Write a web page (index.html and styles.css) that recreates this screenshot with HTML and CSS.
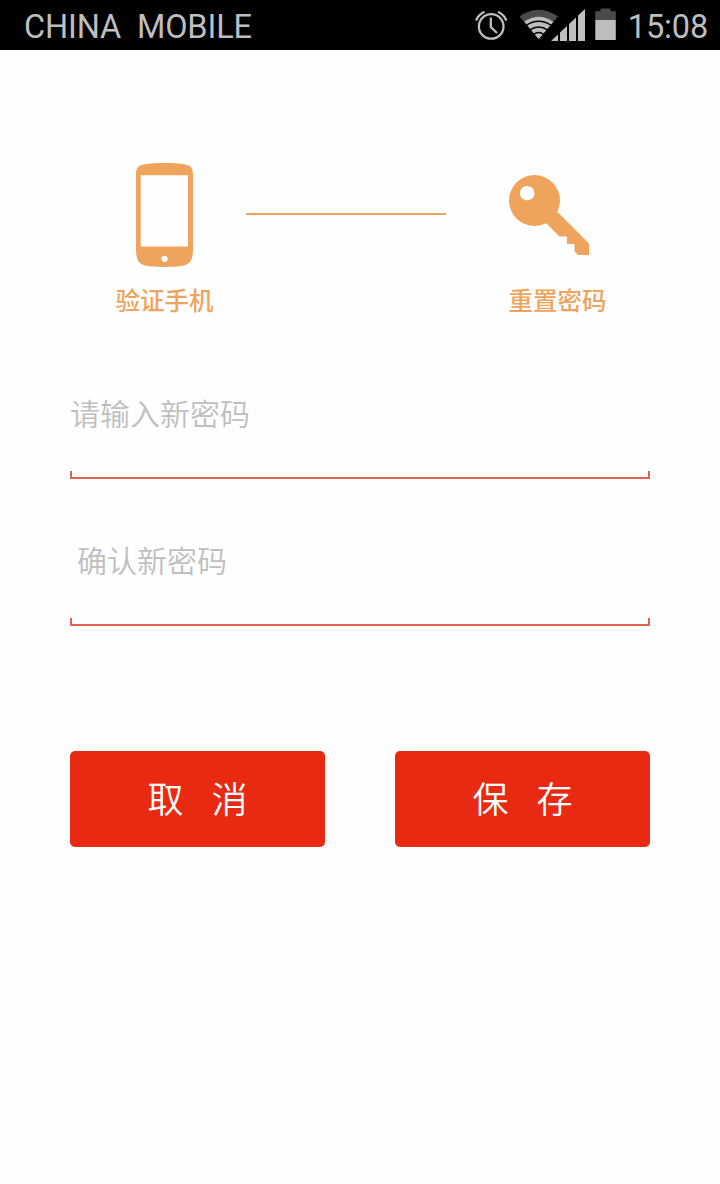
FILE: index.html
```html
<!DOCTYPE html>
<html lang="zh-CN">
<head>
<meta charset="utf-8">
<title>重置密码</title>
<link rel="stylesheet" href="styles.css">
</head>
<body>
<header class="status">
  <span class="carrier">CHINA  MOBILE</span>
  <svg class="status-icons" width="150" height="50" viewBox="472 0 150 50">
    <g fill="none" stroke="#bebebe" stroke-width="2.300">
      <circle cx="491.2" cy="26.4" r="12.3"/>
      <path d="M490.8 17.5v9.5l6.2 6M476 20.5q2.500-6 8.500-8.800M506.400 20.500q-2.500-6-8.500-8.800"/>
    </g>
    <path fill="#4b4b4b" d="M519.500 16.500q19.200-13.500 38.500 0l-4.600 5.500q-14.700-10-29.300 0z"/>
    <path fill="#bebebe" d="M524.200 21.700q14.500-9.800 29.200 0L538.700 39.200z"/>
    <path fill="none" stroke="#000" stroke-width="1.500" d="M526 25.500q12.700-8.500 25.400 0M529.500 30.200q9.200-6.200 18.400 0M533.500 34.500q5.200-4 10.400 0"/>
    <path fill="#bebebe" d="M551 41l7-6.600V41zM560 41v-8.500l7-6.600V41zM569 41V24l7-6.600V41zM578 41V15.600l7-6.600V41z"/>
    <path fill="#4b4b4b" d="M595.300 20v-8.700h5.300V8.500h9.900v2.800h5.300V20z"/>
    <path fill="#bebebe" d="M595.300 20h20.500v20h-20.500z"/>
  </svg>
  <span class="time">15:08</span>
</header>
<main>
  <section class="steps">
    <div class="step">
      <svg class="step-icon" width="100" height="110" viewBox="115 160 100 110">
        <path fill="#eea45c" fill-rule="evenodd" d="M136 176c0-7 1-9.500 6-11 7-2.600 38-2.600 45 0 5 1.500 6 4 6 11v73c0 9-2 14-7.500 16-6 2.600-36 2.600-42 0-5.500-2-7.500-7-7.500-16zM140.700 175.300v71.200h47.300v-71.200z"/>
        <circle cx="164.500" cy="258.800" r="3.100" fill="#fff"/>
      </svg>
      <span class="step-label">验证手机</span>
    </div>
    <div class="connector"></div>
    <div class="step">
      <svg class="step-icon" width="100" height="110" viewBox="508 160 100 110">
        <path fill="#eea45c" d="M557.500 212L589 243.500V255h-11l-3.500-3.500V244H567v-7.500h-7.500L546 223z"/>
        <circle cx="534.500" cy="200.500" r="25.500" fill="#eea45c"/>
        <circle cx="527.200" cy="193.200" r="7.300" fill="#fff"/>
      </svg>
      <span class="step-label">重置密码</span>
    </div>
  </section>
  <form>
    <div class="field"><input class="field-input" type="text" placeholder="请输入新密码"></div>
    <div class="field"><input class="field-input field-confirm" type="text" placeholder="确认新密码"></div>
    <div class="actions">
      <button class="btn" type="button"><span>取</span><span>消</span></button>
      <button class="btn" type="button"><span>保</span><span>存</span></button>
    </div>
  </form>
</main>
</body>
</html>
```
FILE: styles.css
```css
* { box-sizing: border-box; }
body {
  margin: 0;
  min-height: 1184px;
  background: #fefefe;
  font-family: "Noto Sans CJK SC", sans-serif;
}
.status {
  display: flex;
  align-items: center;
  height: 50px;
  padding: 0 12px 0 24px;
  background: #000;
  color: #bebebe;
  font: 32.500px/50px Roboto, sans-serif;
  letter-spacing: -0.150px;
  white-space: pre;
}
.carrier { padding-top: 3px; }
.status-icons { margin-left: auto; }
.time { width: 86px; padding-top: 3px; text-align: right; }
main { padding: 110px 70px 0; }
.steps {
  display: flex;
  padding: 0 42px 0 45px;
  justify-content: space-between;
}
.step { width: 100px; }
.step-icon { display: block; }
.step-label {
  display: block;
  margin-top: 12px;
  padding-left: 0.500px;
  color: #eea45c;
  font-size: 24.500px;
  font-weight: 500;
  line-height: 36px;
  white-space: nowrap;
}
.connector {
  width: 200px;
  height: 2px;
  margin: 53px 32px 0 0;
  background: #eea45c;
}
form { padding-top: 61px; }
.field {
  height: 100px;
  margin-bottom: 47px;
  background:
    linear-gradient(#e16250, #e16250) left bottom / 100% 2px no-repeat,
    linear-gradient(#e16250, #e16250) left bottom / 2px 8px no-repeat,
    linear-gradient(#e16250, #e16250) right bottom / 2px 8px no-repeat;
}
.field-input {
  display: block;
  width: 100%;
  height: 66px;
  padding: 0;
  border: 0;
  outline: 0;
  background: transparent;
  font: 350 30px "Noto Sans CJK SC", sans-serif;
}
.field-input::placeholder { color: #bfbfbf; }
.field-confirm { padding-left: 7px; }
.actions {
  display: flex;
  justify-content: space-between;
  padding-top: 78px;
}
.btn {
  display: flex;
  align-items: center;
  justify-content: center;
  gap: 28px;
  width: 255px;
  height: 96px;
  padding: 0 0 5px;
  border: 0;
  border-radius: 5px;
  background: #e72a11;
  color: #fff;
  font: 350 36px "Noto Sans CJK SC", sans-serif;
}
```
